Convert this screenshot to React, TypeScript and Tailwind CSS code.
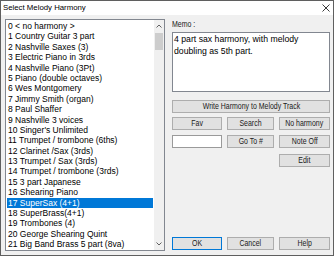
import React from "react";

const harmonies = [
  "0 < no harmony >",
  "1 Country Guitar 3 part",
  "2 Nashville Saxes (3)",
  "3 Electric Piano in 3rds",
  "4 Nashville Piano (3Pt)",
  "5 Piano (double octaves)",
  "6 Wes Montgomery",
  "7 Jimmy Smith (organ)",
  "8 Paul Shaffer",
  "9 Nashville 3 voices",
  "10 Singer's Unlimited",
  "11 Trumpet / trombone (6ths)",
  "12 Clarinet /Sax (3rds)",
  "13 Trumpet / Sax (3rds)",
  "14 Trumpet / trombone (3rds)",
  "15 3 part Japanese",
  "16 Shearing Piano",
  "17 SuperSax (4+1)",
  "18 SuperBrass(4+1)",
  "19 Trombones (4)",
  "20 George Shearing Quint",
  "21 Big Band Brass 5 part (8va)",
];

const selected = 17;

// the dialog's button font is a condensed one; squeeze Liberation Sans to match
const Narrow = ({ children, left }: { children: React.ReactNode; left?: boolean }) => (
  <span
    className={`inline-block whitespace-nowrap text-[8.5px] leading-none scale-x-[0.82] text-[#1a1a1a] ${
      left ? "origin-left" : "origin-center"
    }`}
  >
    {children}
  </span>
);

const Btn = ({ label, def, className }: { label: string; def?: boolean; className?: string }) => (
  <div
    className={`h-[13px] flex items-center justify-center bg-[#e1e1e1] border ${
      def ? "border-[#0078d7]" : "border-[#adadad]"
    } ${className ?? ""}`}
  >
    <Narrow>{label}</Narrow>
  </div>
);

const Chevron = ({ up }: { up?: boolean }) => (
  <svg width="6" height="4" viewBox="0 0 6 4">
    <path
      d={up ? "M0.5 3.5 L3 1 L5.5 3.5" : "M0.5 0.5 L3 3 L5.5 0.5"}
      fill="none"
      stroke="#606060"
      strokeWidth="1"
    />
  </svg>
);

export default function App() {
  return (
    <div className="w-[334px] h-[256px] bg-[#f0f0f0] border border-[#5f5f5f] flex flex-col overflow-hidden text-black font-['Liberation_Sans',Arial,sans-serif]">
      {/* title bar */}
      <div className="h-[14px] bg-white flex items-center justify-between pl-[2px] pr-[3px]">
        <span className="text-[7.8px] leading-none">Select Melody Harmony</span>
        <svg width="8" height="8" viewBox="0 0 8 8">
          <path d="M0.5 0.5 L7.5 7.5 M7.5 0.5 L0.5 7.5" stroke="#222" strokeWidth="0.9" />
        </svg>
      </div>

      <div className="flex-1 flex pl-[4px] gap-[7px]">
        {/* list box */}
        <div className="mt-[4px] w-[160px] h-[232px] bg-white border border-[#828790] flex">
          <div className="flex-1 pt-[1px] pl-[1px] pr-[1px] overflow-hidden">
            {harmonies.map((h, i) => (
              <div
                key={h}
                className={`h-[10.4px] leading-[10.4px] text-[8.5px] pl-[1px] whitespace-nowrap ${
                  i === selected ? "bg-[#0078d7] text-white" : ""
                }`}
              >
                {h}
              </div>
            ))}
          </div>
          <div className="w-[10px] bg-[#f0f0f0] flex flex-col">
            <div className="h-[12px] flex items-center justify-center">
              <Chevron up />
            </div>
            <div className="mt-[1px] mx-[1px] h-[17px] bg-[#cdcdcd]" />
            <div className="flex-1" />
            <div className="h-[12px] flex items-center justify-center">
              <Chevron />
            </div>
          </div>
        </div>

        {/* right column */}
        <div className="w-[158px] flex flex-col pt-[4px] pb-[5px]">
          <div className="h-[11px] flex items-center">
            <Narrow left>Memo :</Narrow>
          </div>
          <div className="mt-[2px] h-[60px] bg-white border border-[#828790] px-[1px] text-[8.7px] leading-[12.4px]">
            4 part sax harmony, with melody
            <br />
            doubling as 5th part.
          </div>
          <Btn label="Write Harmony to Melody Track" className="mt-[8px]" />
          <div className="mt-[4px] grid grid-cols-[50px_47px_51px] gap-[5px]">
            <Btn label="Fav" />
            <Btn label="Search" />
            <Btn label="No harmony" />
          </div>
          <div className="mt-[5px] grid grid-cols-[50px_47px_51px] gap-[5px]">
            <div className="h-[13px] bg-white border border-[#9a9a9a]" />
            <Btn label="Go To #" />
            <Btn label="Note Off" />
          </div>
          <div className="mt-[6px] grid grid-cols-[50px_47px_51px] gap-[5px]">
            <div />
            <div />
            <Btn label="Edit" />
          </div>
          <div className="mt-auto grid grid-cols-[50px_47px_51px] gap-[5px]">
            <Btn label="OK" def />
            <Btn label="Cancel" />
            <Btn label="Help" />
          </div>
        </div>
      </div>
    </div>
  );
}
